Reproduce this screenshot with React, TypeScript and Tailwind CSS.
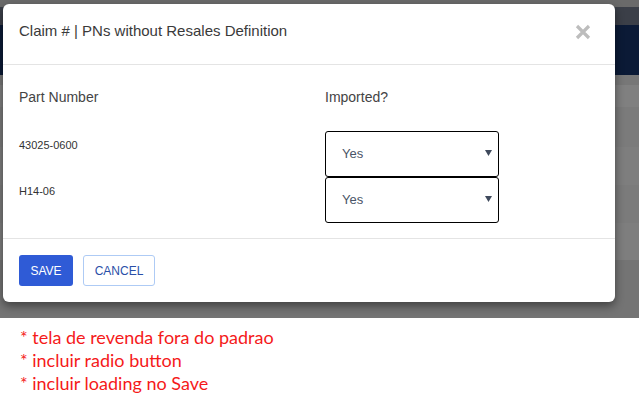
import React from "react";

function Select() {
  return (
    <div className="relative flex h-[46px] w-[174px] items-center rounded-[3px] border border-black bg-white pl-4 text-[13px] text-[#4a5568]">
      <span>Yes</span>
      <svg className="absolute right-[6px] top-[18px]" width="7" height="6" viewBox="0 0 7 6">
        <path d="M0 0 L7 0 L3.5 6 Z" fill="#3f4a5c" />
      </svg>
    </div>
  );
}

export default function App() {
  return (
    <div className="h-[402px] w-[639px] bg-white" style={{ fontFamily: "'Liberation Sans', Arial, sans-serif" }}>
      <div className="relative h-[318px] w-full overflow-hidden bg-[#7a7a7a]">
        <div className="flex flex-col">
          <div className="h-[7px] bg-[#6a6a6a]" />
          <div className="h-[18px] bg-[#3b3f48]" />
          <div className="h-[50px] bg-[#0b1a36]" />
          <div className="h-[10px] bg-[#777777]" />
          <div className="h-[22px] bg-[#808080]" />
          <div className="h-[40px] bg-[#7b7b7b]" />
          <div className="h-[38px] bg-[#7e7e7e]" />
          <div className="h-[38px] bg-[#7b7b7b]" />
          <div className="h-[37px] bg-[#7e7e7e]" />
          <div className="h-[58px] bg-[#747474]" />
        </div>
        <div className="absolute left-[3px] top-[4px] flex h-[298px] w-[612px] flex-col rounded-[6px] bg-white shadow-[0_4px_10px_rgba(0,0,0,0.45)]">
          <div className="flex h-[61px] items-center justify-between border-b border-[#e4e4e4] pl-4 pr-[24px]">
            <span className="-mt-[6px] text-[15px] text-[#3a3a3a]">Claim # | PNs without Resales Definition</span>
            <svg width="16" height="16" viewBox="0 0 16 16" className="-mt-[4px]">
              <path d="M2 2 L14 14 M14 2 L2 14" stroke="#bdbdbd" strokeWidth="3.2" strokeLinecap="butt" />
            </svg>
          </div>
          <div className="flex h-[174px] flex-col border-b border-[#e4e4e4] pl-4">
            <div className="flex pt-[22px] text-[14px] text-[#444]">
              <span className="w-[306px]">Part Number</span>
              <span>Imported?</span>
            </div>
            <div className="mt-[23px] flex">
              <div className="flex w-[306px] flex-col text-[11px] text-[#333]">
                <span className="mt-[6px] h-[46px]">43025-0600</span>
                <span className="">H14-06</span>
              </div>
              <div className="flex flex-col">
                <Select />
                <Select />
              </div>
            </div>
          </div>
          <div className="flex gap-[10px] pl-4 pt-[16px]">
            <button className="h-[31px] w-[54px] rounded-[3px] bg-[#2f5bd6] text-[12px] text-white">SAVE</button>
            <button className="h-[31px] w-[72px] rounded-[3px] border border-[#aecbf5] bg-white text-[12px] text-[#2a4fa8]">CANCEL</button>
          </div>
        </div>
      </div>
      <div className="flex flex-col pl-[20px] pt-[8px] text-[18px] leading-[23px] text-[#f51a1a]" style={{ fontFamily: "Lato, sans-serif" }}>
        <span>* tela de revenda fora do padrao</span>
        <span>* incluir radio button</span>
        <span>* incluir loading no Save</span>
      </div>
    </div>
  );
}
